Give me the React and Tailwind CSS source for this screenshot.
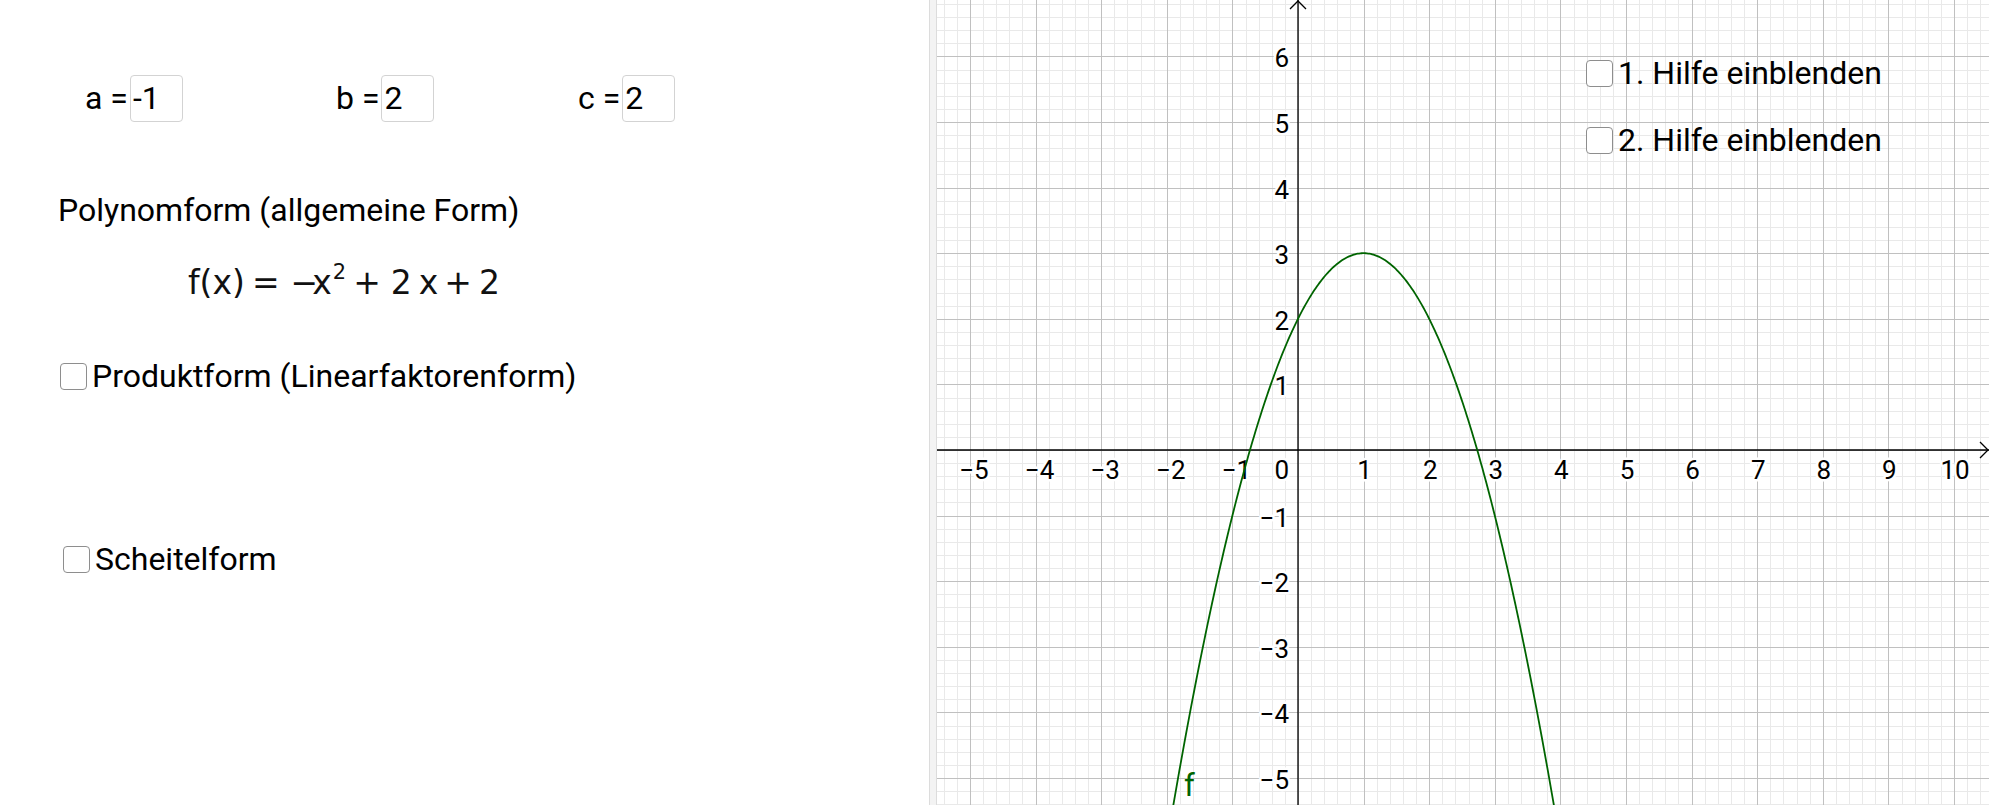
import React from 'react'

// graph view: origin in panel coordinates and pixels per unit
const U = 65.6
const OX = 361
const OY = 450
const W = 1052
const H = 805
const MINUS = '\u2212'

const crisp = (v) => Math.round(v) + 0.5
const range = (a, b) => Array.from({ length: b - a + 1 }, (_, i) => a + i)
const fn = (x) => -x * x + 2 * x + 2

const curvePath = () => {
  const pts = []
  for (let x = -2.05; x <= 4.05; x += 0.02) {
    pts.push(`${(OX + x * U).toFixed(2)},${(OY - fn(x) * U).toFixed(2)}`)
  }
  return 'M' + pts.join('L')
}

const fmt = (n) => (n < 0 ? MINUS + Math.abs(n) : String(n))

const Graph = () => {
  const step = U / 5
  const xs = range(-40, 90).map((k) => ({ k, p: OX + k * step })).filter((l) => l.p >= 0 && l.p <= W)
  const ys = range(-40, 40).map((k) => ({ k, p: OY - k * step })).filter((l) => l.p >= 0 && l.p <= H)
  const xLabels = range(-5, 10).filter((n) => n !== 0)
  const yLabels = range(-5, 6).filter((n) => n !== 0)
  const halo = { stroke: 'white', strokeWidth: 5, paintOrder: 'stroke', strokeLinejoin: 'round' }

  return (
    <svg width={W} height={H} className="block font-['Roboto',sans-serif]">
      {/* minor grid */}
      {xs.filter((l) => l.k % 5 !== 0).map((l) => (
        <line key={'mx' + l.k} x1={crisp(l.p)} x2={crisp(l.p)} y1={0} y2={H} stroke="#e9e9e9" strokeWidth={1} />
      ))}
      {ys.filter((l) => l.k % 5 !== 0).map((l) => (
        <line key={'my' + l.k} y1={crisp(l.p)} y2={crisp(l.p)} x1={0} x2={W} stroke="#e9e9e9" strokeWidth={1} />
      ))}
      {/* major grid */}
      {xs.filter((l) => l.k % 5 === 0).map((l) => (
        <line key={'gx' + l.k} x1={crisp(l.p)} x2={crisp(l.p)} y1={0} y2={H} stroke="#c0c0c0" strokeWidth={1} />
      ))}
      {ys.filter((l) => l.k % 5 === 0).map((l) => (
        <line key={'gy' + l.k} y1={crisp(l.p)} y2={crisp(l.p)} x1={0} x2={W} stroke="#c0c0c0" strokeWidth={1} />
      ))}

      {/* axes */}
      <line x1={0} x2={W} y1={OY} y2={OY} stroke="#000" strokeWidth={1.3} />
      <line x1={OX} x2={OX} y1={0} y2={H} stroke="#000" strokeWidth={1.3} />
      <path d={`M${W - 9},${OY - 8} L${W - 1},${OY} L${W - 9},${OY + 8}`} fill="none" stroke="#000" strokeWidth={1.3} />
      <path d={`M${OX - 8},9 L${OX},1 L${OX + 8},9`} fill="none" stroke="#000" strokeWidth={1.3} />

      {/* axis numbers */}
      <g fontSize={26} fill="#000">
        {xLabels.map((n) => (
          <text key={'lx' + n} x={OX + n * U + (n < 0 ? 4 : 1)} y={OY + 20} textAnchor="middle" dominantBaseline="central" {...halo}>
            {fmt(n)}
          </text>
        ))}
        {yLabels.map((n) => (
          <text key={'ly' + n} x={OX - 9} y={OY - n * U + 2} textAnchor="end" dominantBaseline="central" {...halo}>
            {fmt(n)}
          </text>
        ))}
        <text x={OX - 9} y={OY + 20} textAnchor="end" dominantBaseline="central" {...halo}>0</text>
      </g>

      {/* f(x) = -x^2 + 2x + 2 */}
      <path d={curvePath()} fill="none" stroke="#006400" strokeWidth={1.8} />
      <text x={247} y={796} fontSize={31} fill="#006400">f</text>
    </svg>
  )
}

const Param = ({ name, value }) => (
  <div className="flex items-center">
    <span className="mr-[2px]">{name} =</span>
    <div className="h-[47px] w-[53px] rounded-[4px] border border-[#d3d3d3] pl-[2px] leading-[45px]">{value}</div>
  </div>
)

const CheckRow = ({ label, className }) => (
  <label className={'flex items-center gap-[5px] leading-[38px] ' + className}>
    <span className="h-[27px] w-[27px] shrink-0 rounded-[4px] border-[1.5px] border-[#8e8e8e] bg-white" />
    <span>{label}</span>
  </label>
)

const Formula = () => (
  <div className="ml-[130px] mt-[33px] flex h-[42px] items-baseline font-['DejaVu_Sans',sans-serif] text-[33px] leading-[42px] text-[#111]">
    <span>f(x)</span>
    <span className="ml-[7px]">=</span>
    <span className="ml-[11px] mr-[-6px]">{MINUS}</span>
    <span>x</span>
    <span className="relative top-[-15px] ml-[1px] text-[21px] leading-[21px]">2</span>
    <span className="ml-[7px]">+</span>
    <span className="ml-[10px]">2</span>
    <span className="ml-[7px]">x</span>
    <span className="ml-[6px]">+</span>
    <span className="ml-[7px]">2</span>
  </div>
)

export default function App() {
  return (
    <div className="flex h-[805px] w-[1989px] overflow-hidden bg-white font-['Roboto',sans-serif] text-[32px] text-black">
      <div className="w-[929px] shrink-0 pl-[58px] pt-[74px]">
        <div className="grid grid-cols-[251px_242px_auto] pl-[27px]">
          <Param name="a" value="-1" />
          <Param name="b" value="2" />
          <Param name="c" value="2" />
        </div>
        <p className="mt-[69px] leading-[38px]">Polynomform (allgemeine Form)</p>
        <Formula />
        <CheckRow label="Produktform (Linearfaktorenform)" className="ml-[2px] mt-[53px]" />
        <CheckRow label="Scheitelform" className="ml-[5px] mt-[145px]" />
      </div>

      <div className="w-[8px] shrink-0 border-x border-[#dcdcdc] bg-[#f3f3f3]" />

      <div className="relative flex-1">
        <Graph />
        <div className="absolute left-[649px] top-[54px] flex flex-col gap-[29px]">
          <CheckRow label="1. Hilfe einblenden" className="" />
          <CheckRow label="2. Hilfe einblenden" className="" />
        </div>
      </div>
    </div>
  )
}
